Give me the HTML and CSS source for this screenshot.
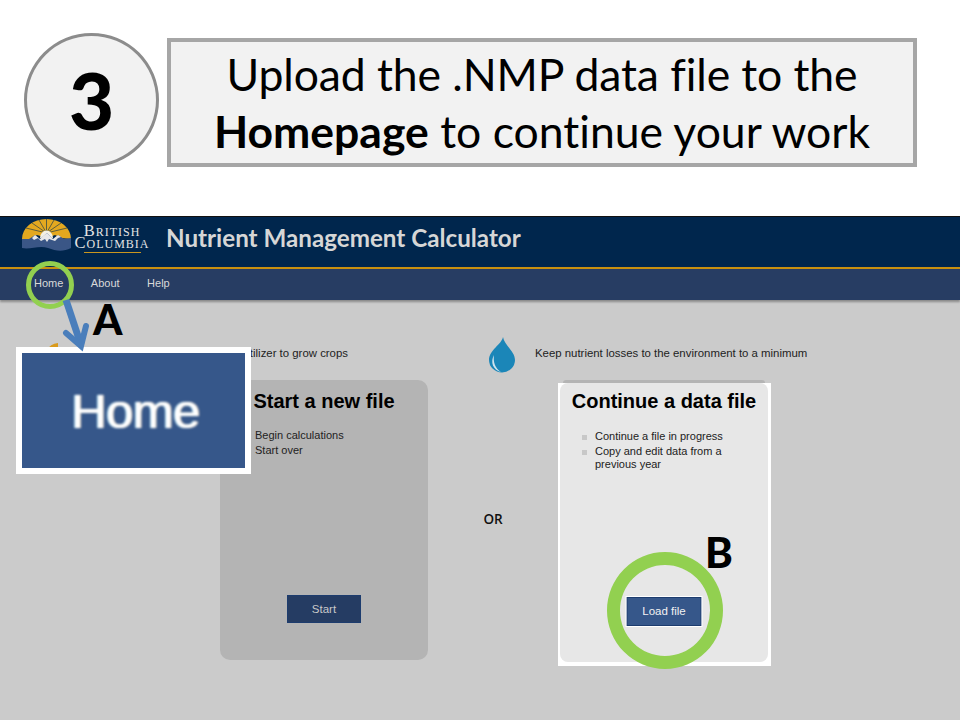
FILE: index.html
```html
<!DOCTYPE html>
<html lang="en">
<head>
<meta charset="utf-8">
<title>Nutrient Management Calculator</title>
<link rel="stylesheet" href="styles.css">
</head>
<body>
<div class="slide">
  <header class="lesson">
    <div class="step">3</div>
    <div class="instruction">
      <div class="line-one">Upload the .NMP data file to the</div>
      <div><strong>Homepage</strong> to continue your work</div>
    </div>
  </header>
  <section class="app">
    <div class="banner">
      <svg class="logo" width="51" height="33" viewBox="0 0 51 33">
        <path d="M1 20 A24.500 20 0 0 1 50 20 L40 19 L34 16 L26 19 L16 16 L10 20 Z" fill="#e3a81f"/>
        <g stroke="#002a52" stroke-width="0.6">
          <path d="M25.500 14V0M25.500 14L18 1M25.500 14L33 1M25.500 14L11 4M25.500 14L40 4M25.500 14L5 9M25.500 14L46 9"/>
        </g>
        <path d="M19 19a6.500 7.500 0 0 1 13 0Z" fill="#f4f1e4"/>
        <path d="M1 20 L8 20 L14 16 L19 20 L26 14 L32 20 L37 16 L43 20 L50 19 V29 C42 33 35 32 27 29 C18 26 9 31 1 29 Z" fill="#3a5686"/>
        <path d="M14 16 L19 20 L22 17 L26 14 L32 20 L34.500 18 L37 16 L40 18 L37 19 L34 22 L31 21 L28 20 L26 23 L24 20 L20 22 L17 19 L13 21 L11 19 Z" fill="#e8e8e8"/>
      </svg>
      <div class="wordmark">
        <span class="wm-one">British</span>
        <span class="wm-two">Columbia</span>
        <span class="wm-rule"></span>
      </div>
      <h1 class="app-title">Nutrient Management Calculator</h1>
    </div>
    <nav class="nav">
      <a>Home</a>
      <a>About</a>
      <a>Help</a>
    </nav>
    <div class="tags">
      <div class="tag tag-left">
        <svg class="tag-icon" width="30" height="30" viewBox="0 0 30 30"><path d="M0 10 Q3 4 11 3 L11 7 Q6 8 3 11 Z" fill="#d99a1c"/></svg>
        <span>Use manure and fertilizer to grow crops</span>
      </div>
      <div class="tag tag-right">
        <svg class="drop" width="26" height="36" viewBox="0 0 26 36">
          <path d="M14 0 C13 7 0 13 0 23 A13 12.500 0 0 0 26 23 C26 14 15 8 14 0 Z" fill="#1b86b8"/>
          <path d="M5 18 C1 25 4 33 12 35 C6 31 4 25 5 18 Z" fill="#cfe3ee"/>
        </svg>
        <span>Keep nutrient losses to the environment to a minimum</span>
      </div>
    </div>
    <div class="choices">
      <article class="card card-start">
        <h2>Start a new file</h2>
        <ul>
          <li>Begin calculations</li>
          <li>Start over</li>
        </ul>
        <button class="btn btn-dim">Start</button>
      </article>
      <div class="or">OR</div>
      <div class="frame">
        <article class="card card-load">
          <h2>Continue a data file</h2>
          <ul>
            <li>Continue a file in progress</li>
            <li>Copy and edit data from a previous year</li>
          </ul>
          <button class="btn btn-load">Load file</button>
        </article>
      </div>
    </div>
  </section>

  <div class="ring ring-home"></div>
  <div class="mark mark-a">A</div>
  <div class="zoombox"><span>Home</span></div>
  <svg class="arrow" width="44" height="70" viewBox="0 0 44 70">
    <path d="M4 2 L19 47" stroke="#4a7ebb" stroke-width="7" fill="none"/>
    <path d="M4 35 L19 48 L24 28" stroke="#4a7ebb" stroke-width="6" fill="none" stroke-linejoin="miter" stroke-linecap="round"/>
  </svg>
  <div class="ring ring-load"></div>
  <div class="mark mark-b">B</div>
</div>
</body>
</html>
```
FILE: styles.css
```css
* { box-sizing: border-box; }
html, body { margin: 0; padding: 0; background: #fff; }
.slide { position: relative; width: 960px; height: 720px; overflow: hidden; font-family: "Liberation Sans", Arial, sans-serif; }

.lesson { height: 216px; display: flex; align-items: flex-start; padding: 33px 0 0 24px; gap: 8px; font-family: Lato, "Open Sans", sans-serif; color: #000; font-variant-ligatures: none; }
.step { width: 135px; height: 134px; border-radius: 50%; border: 3px solid #8c8c8c; background: #f2f2f2; display: flex; align-items: center; justify-content: center; font-size: 78px; font-weight: 900; line-height: 1; }
.instruction { width: 750px; height: 129px; margin-top: 5px; border: 4px solid #a6a6a6; background: #f2f2f2; display: flex; flex-direction: column; align-items: center; justify-content: center; padding-bottom: 1px; font-size: 44.500px; line-height: 57px; }
.line-one { letter-spacing: -0.1px; }
.instruction strong { font-weight: 700; }

.app { height: 504px; background: #cbcbcb; border-top: 1px solid #111; }
.banner { height: 50px; background: #00264d; display: flex; align-items: flex-start; padding: 2px 0 0 21px; }
.logo { flex: none; }
.wordmark { flex: none; display: flex; flex-direction: column; align-items: center; width: 76px; margin: 6px 0 0 2px; font-family: "Liberation Serif", serif; color: #e4e4e4; font-size: 16.500px; letter-spacing: 1px; line-height: 12px; font-variant: small-caps; }
.wm-one, .wm-two { display: block; white-space: nowrap; }
.wm-rule { display: block; width: 57px; height: 1px; margin-top: 3px; background: #c9961f; }
.app-title { margin: 2px 0 0 16px; font-family: Lato, "Open Sans", sans-serif; font-size: 24.200px; line-height: 34px; font-weight: 700; color: #d6d6d6; white-space: nowrap; }

.nav { height: 33px; background: #273d63; border-top: 2px solid #c8900f; display: flex; align-items: center; padding: 0 0 3px 34px; gap: 27.500px; font-size: 11px; color: #d9d9d9; box-shadow: 0 2px 2px #8a8a8a; }

.tags { height: 80px; display: flex; align-items: flex-start; padding-top: 37px; font-size: 11.400px; color: #222; }
.tag { display: flex; align-items: center; }
.tag span { white-space: nowrap; padding-bottom: 4px; }
.tag-left { width: 348px; margin: 3px 141px 0 0; padding-left: 47px; justify-content: space-between; }
.tag-left .tag-icon { flex: none; }
.tag-right { gap: 20px; }

.choices { display: flex; padding-left: 220px; }
.card { position: relative; border-radius: 10px; display: flex; flex-direction: column; align-items: center; }
.card h2 { margin: 0; font-size: 20px; font-weight: 700; color: #000; line-height: 24px; white-space: nowrap; }
.card ul { align-self: stretch; margin: 0; padding: 0; list-style: none; font-size: 11px; line-height: 13px; color: #222; }
.card-start { width: 208px; height: 280px; background: #b4b4b4; padding-top: 9px; }
.card-start ul { padding: 16px 0 0 35px; }
.card-start li { margin-bottom: 2px; }
.or { width: 130px; padding-top: 131px; text-align: center; font-family: "Open Sans", sans-serif; font-size: 13.500px; line-height: 16px; font-weight: 600; color: #111; }
.frame { position: relative; width: 213px; height: 283px; margin-top: 3px; background: #fff; padding: 0 3px 4px 2px; }
.frame::before { content: ""; position: absolute; left: 5px; right: 6px; top: -3px; height: 3px; background: #b4b4b4; border-radius: 6px 6px 0 0; }
.card-load { height: 100%; background: #e7e7e7; padding-top: 6px; border-radius: 8px; }
.card-load ul { padding: 17px 16px 0 35px; }
.card-load li { position: relative; margin-bottom: 2px; }
.card-load li::before { content: ""; position: absolute; left: -13px; top: 5px; width: 5px; height: 5px; background: #c8c8c8; }
.btn { position: absolute; left: 50%; transform: translateX(-50%); font: 11.500px/1 "Liberation Sans", Arial, sans-serif; padding: 0; }
.btn-dim { bottom: 37px; width: 74px; height: 28px; padding-top: 2px; background: #253c63; border: 1px solid #1d3c6e; color: #c9c9c9; }
.btn-load { bottom: 36px; width: 75px; height: 29px; background: #36578a; border: 1px solid #1d3c6e; outline: 1px solid #fff; color: #f2f2f2; }

.ring { position: absolute; border-radius: 50%; border-style: solid; border-color: #92d050; }
.ring-home { left: 26px; top: 261px; width: 48px; height: 48px; border-width: 5px; }
.ring-load { left: 607px; top: 552px; width: 116px; height: 117px; border-width: 13px; }
.arrow { position: absolute; left: 62px; top: 298px; }
.mark { position: absolute; font-family: Lato, "Open Sans", sans-serif; font-weight: 900; font-size: 42px; line-height: 1; color: #000; }
.mark-a { left: 93px; top: 298px; }
.mark-b { left: 705px; top: 531px; }
.zoombox { position: absolute; left: 16px; top: 347px; width: 235px; height: 127px; border: 6px solid #fff; background: #36578a; display: flex; align-items: center; justify-content: center; padding-left: 4px; }
.zoombox span { font-size: 49px; letter-spacing: -0.5px; color: #fff; text-shadow: 1px 0 1px #ffe9d0, -1px 0 1px #bfeeff; filter: blur(0.8px); }
```
